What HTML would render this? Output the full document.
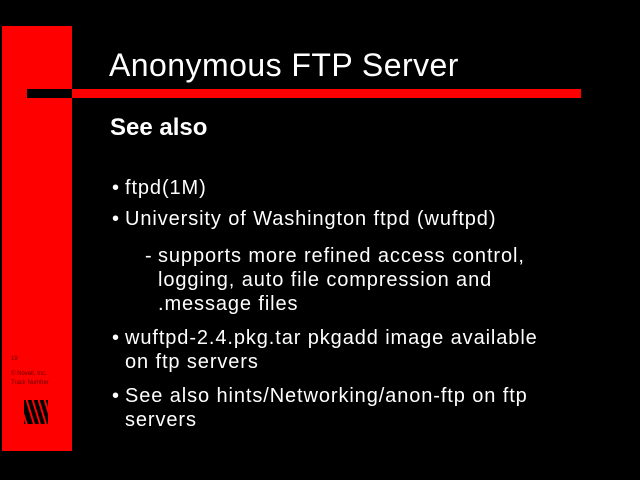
<!DOCTYPE html>
<html><head><meta charset="utf-8"><style>
body{margin:0;width:640px;height:480px;background:#000;position:relative;overflow:hidden;font-family:"Liberation Sans",Arial,sans-serif;color:#fff}
div{position:absolute}
.l{font-size:20px;line-height:20px;white-space:nowrap;letter-spacing:0.9px}
.b{position:absolute;left:-13px}
</style></head><body>
<div style="left:2px;top:26px;width:70px;height:425px;background:#ff0000"></div>
<div style="left:27px;top:89px;width:45px;height:9px;background:#000"></div>
<div style="left:72px;top:89px;width:509px;height:9px;background:#ff0000"></div>
<div style="left:109px;top:49px;font-size:32px;line-height:32px;white-space:nowrap;letter-spacing:0.45px">Anonymous FTP Server</div>
<div style="left:110px;top:116px;font-size:24px;line-height:24px;font-weight:bold">See also</div>
<div class="l" style="left:125px;top:178px"><span class="b">•</span>ftpd(1M)</div>
<div class="l" style="left:125px;top:209px"><span class="b">•</span>University of Washington ftpd (wuftpd)</div>
<div class="l" style="left:145px;top:246px">-</div>
<div class="l" style="left:158px;top:246px">supports more refined access control,</div>
<div class="l" style="left:158px;top:270px">logging, auto file compression and</div>
<div class="l" style="left:158px;top:294px">.message files</div>
<div class="l" style="left:125px;top:328px"><span class="b">•</span>wuftpd-2.4.pkg.tar pkgadd image available</div>
<div class="l" style="left:125px;top:352px">on ftp servers</div>
<div class="l" style="left:125px;top:386px"><span class="b">•</span>See also hints/Networking/anon-ftp on ftp</div>
<div class="l" style="left:125px;top:410px">servers</div>
<div style="left:11px;top:356px;font-size:6px;color:#600">19</div>
<div style="left:11px;top:371px;font-size:6px;color:#600;white-space:nowrap">© Novell, Inc.</div>
<div style="left:11px;top:380px;font-size:6px;color:#600;white-space:nowrap">Track Number</div>
<svg style="position:absolute;left:24px;top:400px" width="24" height="24" viewBox="0 0 24 24">
<rect width="24" height="24" fill="#000"/>
<g stroke="#ff0000" stroke-width="2">
<path d="M-4 4 L4 28 M2 -2 L10 24 M8 -2 L16 24 M14 -2 L22 24 M20 -2 L28 24"/>
</g></svg>
</body></html>
